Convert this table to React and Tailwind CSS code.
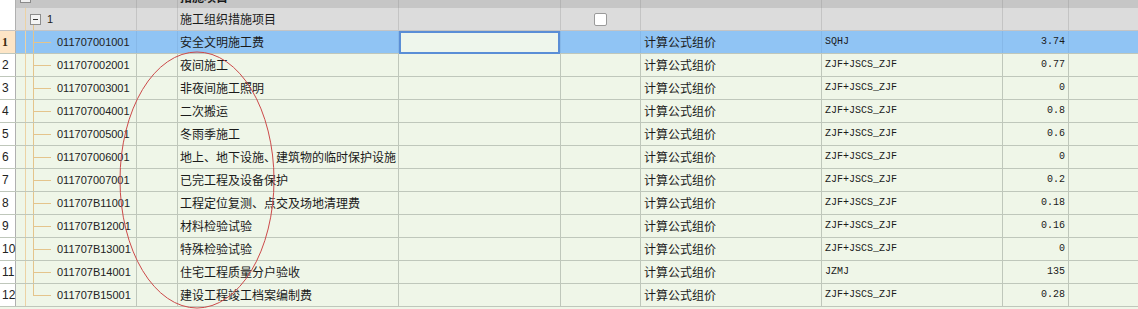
import React from 'react';

const rows = [
  { code: '011707001001', name: '安全文明施工费', formula: 'SQHJ', rate: '3.74' },
  { code: '011707002001', name: '夜间施工', formula: 'ZJF+JSCS_ZJF', rate: '0.77' },
  { code: '011707003001', name: '非夜间施工照明', formula: 'ZJF+JSCS_ZJF', rate: '0' },
  { code: '011707004001', name: '二次搬运', formula: 'ZJF+JSCS_ZJF', rate: '0.8' },
  { code: '011707005001', name: '冬雨季施工', formula: 'ZJF+JSCS_ZJF', rate: '0.6' },
  { code: '011707006001', name: '地上、地下设施、建筑物的临时保护设施', formula: 'ZJF+JSCS_ZJF', rate: '0' },
  { code: '011707007001', name: '已完工程及设备保护', formula: 'ZJF+JSCS_ZJF', rate: '0.2' },
  { code: '011707B11001', name: '工程定位复测、点交及场地清理费', formula: 'ZJF+JSCS_ZJF', rate: '0.18' },
  { code: '011707B12001', name: '材料检验试验', formula: 'ZJF+JSCS_ZJF', rate: '0.16' },
  { code: '011707B13001', name: '特殊检验试验', formula: 'ZJF+JSCS_ZJF', rate: '0' },
  { code: '011707B14001', name: '住宅工程质量分户验收', formula: 'JZMJ', rate: '135' },
  { code: '011707B15001', name: '建设工程竣工档案编制费', formula: 'ZJF+JSCS_ZJF', rate: '0.28' },
];

const cjk = { fontFamily: '"Noto Sans CJK SC", "Liberation Sans", sans-serif' };
const sans = { fontFamily: '"Liberation Sans", Arial, sans-serif' };
const mono = { fontFamily: '"Liberation Mono", "Courier New", monospace' };

// tree guide lines in the code column
const Tree = ({ last }) => (
  <>
    <div className="absolute left-[9px] top-0 bottom-0 w-px bg-[#ecd2a4]" />
    <div className={`absolute left-[17px] top-0 w-px bg-[#e4c48c] ${last ? 'h-[12px]' : 'bottom-0'}`} />
    <div className="absolute left-[17px] top-[11px] w-[18px] h-px bg-[#e4c48c]" />
  </>
);

const DataRow = ({ r, i }) => {
  const sel = i === 0;
  const line = sel ? 'border-[#86b8e8]' : 'border-[#bfc7bb]';
  return (
    <div className="flex h-[23px] border-b border-[#bfc7bb]">
      <div
        style={sel ? { fontFamily: '"Liberation Serif", serif' } : sans}
        className={`w-[16px] shrink-0 border-r border-[#b0b0b0] pl-[2px] text-[12px] leading-[22px] ${
          sel ? 'bg-[#fde5c6] font-bold text-[#3a2a10]' : 'bg-white text-[#222]'
        }`}
      >
        {i + 1}
      </div>
      <div className={`flex flex-1 ${sel ? 'bg-[#90c4f4]' : 'bg-[#eff6e8]'}`}>
        <div style={sans} className={`relative w-[121px] shrink-0 border-r ${line} pl-[41px] text-[11px] leading-[22px] text-[#222]`}>
          <Tree last={i === rows.length - 1} />
          {r.code}
        </div>
        <div className={`w-[41px] shrink-0 border-r ${line}`} />
        <div style={cjk} className={`w-[221px] shrink-0 border-r ${line} pl-[2px] text-[12px] leading-[22px] text-[#1a1a1a] whitespace-nowrap overflow-hidden`}>
          {r.name}
        </div>
        <div className={`w-[162px] shrink-0 border-r ${line}`}>
          {sel && <div className="h-[23px] border-2 border-[#5a8ed6] bg-[#eef6ec]" />}
        </div>
        <div className={`w-[80px] shrink-0 border-r ${line}`} />
        <div style={cjk} className={`w-[181px] shrink-0 border-r ${line} pl-[3px] text-[12px] leading-[22px] text-[#1a1a1a]`}>
          计算公式组价
        </div>
        <div style={mono} className={`w-[181px] shrink-0 border-r ${line} pl-[3px] text-[10px] leading-[22px] text-[#1a1a1a]`}>
          {r.formula}
        </div>
        <div style={mono} className={`w-[66px] shrink-0 border-r ${line} pr-[3px] text-right text-[10px] leading-[22px] text-[#1a1a1a]`}>
          {r.rate}
        </div>
        <div className="flex-1" />
      </div>
    </div>
  );
};

export default function App() {
  return (
    <div className="relative w-[1138px] h-[309px] overflow-hidden bg-[#eff6e8]">
      {/* header band, scrolled so only its lower edge shows */}
      <div className="flex h-[8px] overflow-hidden">
        <div className="w-[16px] shrink-0 bg-white border-r border-[#b0b0b0]" />
        <div className="flex flex-1 bg-[#c6c6c6]">
          <div className="relative w-[121px] shrink-0 border-r border-[#b4b4b4]">
            <div className="absolute left-[4px] top-[-8px] w-[11px] h-[11px] border border-[#8a8a8a] bg-[#f0f0f0]" />
          </div>
          <div className="w-[41px] shrink-0 border-r border-[#b4b4b4]" />
          <div style={cjk} className="w-[221px] shrink-0 border-r border-[#b4b4b4] pl-[2px] text-[12px] font-bold leading-[12px] mt-[-9px] text-[#1a1a1a]">
            措施项目
          </div>
          <div className="w-[162px] shrink-0 border-r border-[#b4b4b4]" />
          <div className="w-[80px] shrink-0 border-r border-[#b4b4b4]" />
          <div className="w-[181px] shrink-0 border-r border-[#b4b4b4]" />
          <div className="w-[181px] shrink-0 border-r border-[#b4b4b4]" />
          <div className="w-[66px] shrink-0 border-r border-[#b4b4b4]" />
          <div className="flex-1" />
        </div>
      </div>

      {/* group row */}
      <div className="flex h-[23px] border-b border-[#c4c4c4]">
        <div className="w-[16px] shrink-0 bg-white border-r border-[#b0b0b0]" />
        <div className="flex flex-1 bg-[#dcdcdc]">
          <div style={sans} className="relative w-[121px] shrink-0 border-r border-[#c4c4c4] flex items-center text-[11px] text-[#222]">
            <div className="absolute left-[9px] top-0 bottom-0 w-px bg-[#ecd2a4]" />
            <div className="absolute left-[17px] top-[16px] bottom-0 w-px bg-[#e4c48c]" />
            <div className="relative ml-[14px] w-[11px] h-[11px] border border-[#8c8c8c] bg-[#f4f4f4] flex items-center justify-center">
              <div className="w-[5px] h-px bg-[#333]" />
            </div>
            <span className="ml-[6px]">1</span>
          </div>
          <div className="w-[41px] shrink-0 border-r border-[#c4c4c4]" />
          <div style={cjk} className="w-[221px] shrink-0 border-r border-[#c4c4c4] pl-[2px] text-[12px] leading-[22px] text-[#1a1a1a]">
            施工组织措施项目
          </div>
          <div className="w-[162px] shrink-0 border-r border-[#c4c4c4]" />
          <div className="w-[80px] shrink-0 border-r border-[#c4c4c4] flex items-center justify-center">
            <div className="w-[13px] h-[13px] rounded-[2px] border border-[#9a9a9a] bg-white" />
          </div>
          <div className="w-[181px] shrink-0 border-r border-[#c4c4c4]" />
          <div className="w-[181px] shrink-0 border-r border-[#c4c4c4]" />
          <div className="w-[66px] shrink-0 border-r border-[#c4c4c4]" />
          <div className="flex-1" />
        </div>
      </div>

      {rows.map((r, i) => (
        <DataRow key={r.code} r={r} i={i} />
      ))}

      {/* hand-drawn annotation */}
      <svg className="absolute left-0 top-0 pointer-events-none" width="1138" height="309">
        <ellipse cx="197" cy="180" rx="77" ry="128" fill="none" stroke="#cc4a4a" strokeWidth="1" />
      </svg>
    </div>
  );
}
